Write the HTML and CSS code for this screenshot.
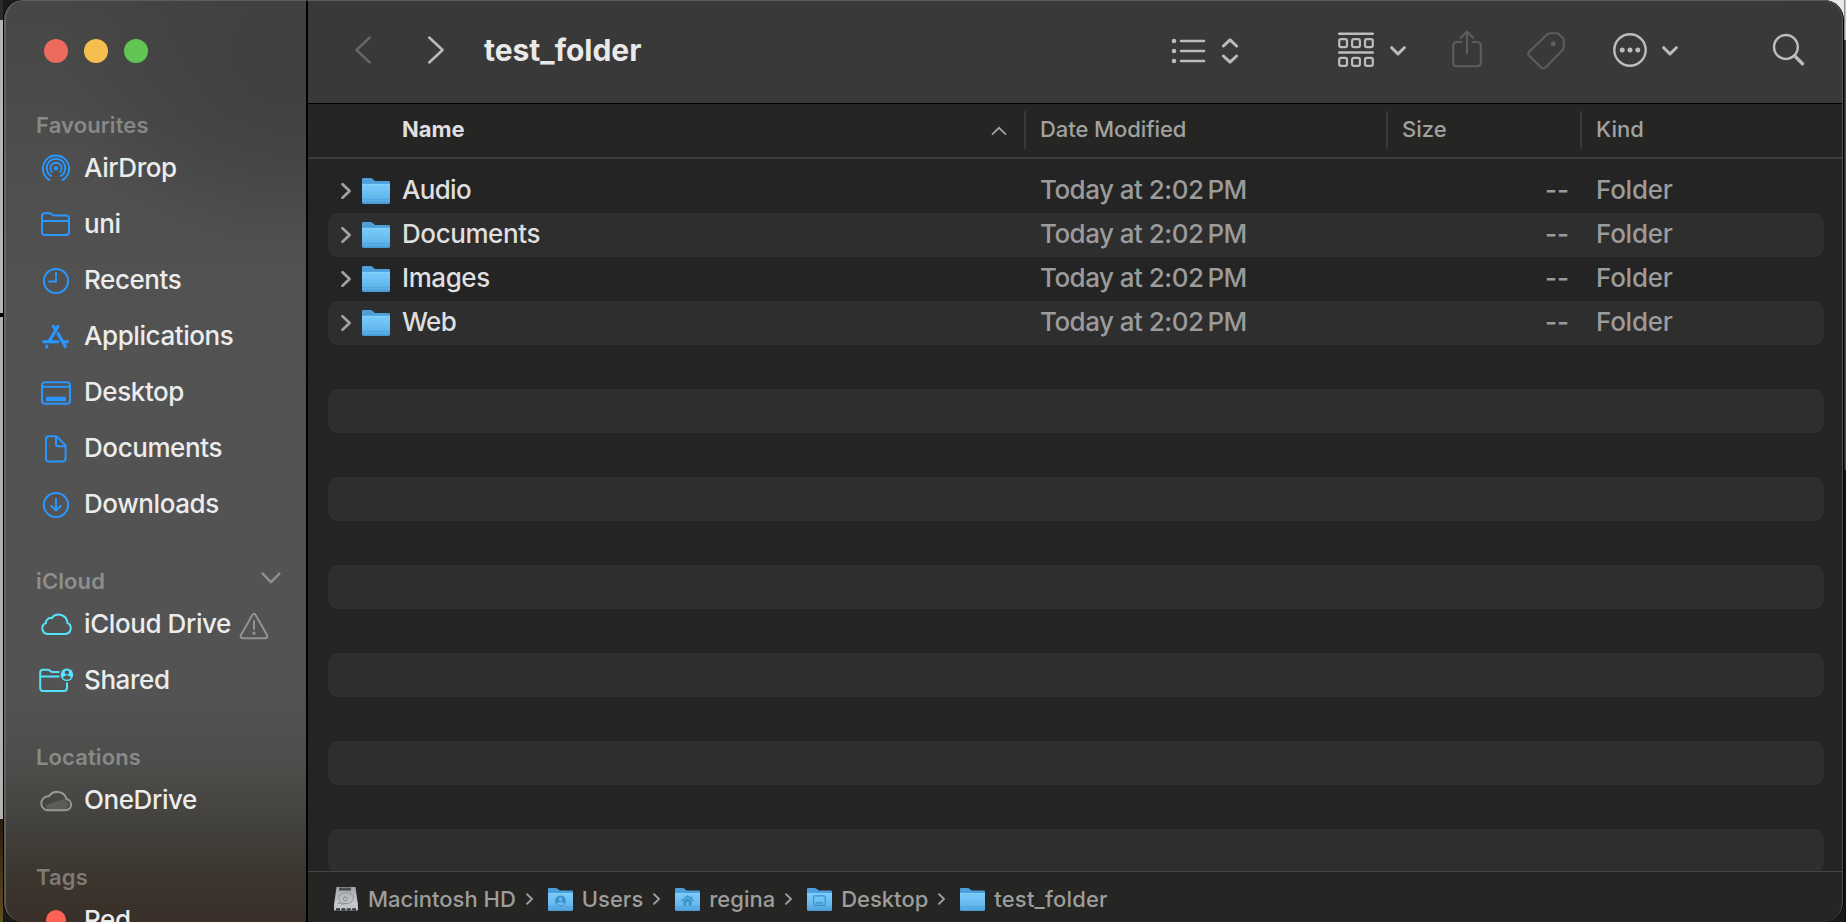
FILE: index.html
```html
<!DOCTYPE html>
<html lang="en">
<head>
<meta charset="utf-8">
<title>test_folder</title>
<link rel="stylesheet" href="styles.css">
</head>
<body>
<svg class="defs" width="0" height="0" aria-hidden="true">
  <defs>
    <linearGradient id="front" x1="0" y1="0" x2="0" y2="1">
      <stop offset="0" stop-color="#7accfa"/><stop offset=".72" stop-color="#62b6ec"/><stop offset=".76" stop-color="#4fa3dc"/><stop offset=".82" stop-color="#5cb0e8"/><stop offset="1" stop-color="#4796cf"/>
    </linearGradient>
    <linearGradient id="disk" x1="0" y1="0" x2="0" y2="1">
      <stop offset="0" stop-color="#a2a5a9"/><stop offset="1" stop-color="#c9ccd0"/>
    </linearGradient>
    <symbol id="folder" viewBox="0 0 28 28">
      <path d="M0 2.2Q0 1 1.2 1H8.6Q9.6 1 10.4 1.7L12.4 3.4Q13 4 14 4H26.8Q28 4 28 5.2V12H0Z" fill="#4b9fdb"/>
      <path d="M0 7H28V25.6Q28 27 26.6 27H1.4Q0 27 0 25.6Z" fill="url(#front)"/>
      <path d="M0 7.3H28" stroke="#8ed5fb" stroke-width=".7"/>
    </symbol>
    <symbol id="chev" viewBox="0 0 10 16"><path d="M1.5 1.2L8.6 8L1.5 14.8" fill="none" stroke="currentColor" stroke-width="2.6" stroke-linecap="round" stroke-linejoin="round"/></symbol>
    <symbol id="drop" viewBox="0 0 16 10"><path d="M1.7 1.7L8 8L14.3 1.7" fill="none" stroke="currentColor" stroke-width="3" stroke-linecap="round" stroke-linejoin="round"/></symbol>
  </defs>
</svg>
<div class="desktop">
<div class="edge edge-left"><i class="e-dark"></i><i class="e-light"></i><i class="e-black"></i><i class="e-light2"></i><i class="e-brown"></i></div>
<div class="window">
  <aside class="sidebar">
    <div class="lights"><i class="close"></i><i class="min"></i><i class="max"></i></div>
    <section class="group">
      <h2>Favourites</h2>
      <div class="item"><svg class="ic" viewBox="0 0 32 32" fill="none" stroke="currentColor" stroke-width="1.9"><circle cx="16" cy="16.3" r="2.2" fill="currentColor" stroke="none"/><path d="M10.2 28.4A13.1 13.1 0 1 1 21.8 28.4"/><path d="M11.8 24.4A9.3 9.3 0 1 1 20.2 24.4"/><path d="M12.4 20.6A5.6 5.6 0 1 1 19.6 20.6"/></svg><span>AirDrop</span></div>
      <div class="item"><svg class="ic" viewBox="0 0 32 32" fill="none" stroke="currentColor" stroke-width="2"><path d="M2 25V8Q2 5.2 4.8 5.2H9.2Q10.4 5.2 11.4 6L12.6 7Q13.4 7.6 14.6 7.6H26Q29 7.6 29 10.5V24Q29 27 26 27H5Q2 27 2 24.2ZM2 13H29"/></svg><span>uni</span></div>
      <div class="item"><svg class="ic" viewBox="0 0 32 32" fill="none" stroke="currentColor" stroke-width="2"><circle cx="16" cy="17" r="12.1"/><path d="M16 8.5V17.5H9" stroke-width="1.8" stroke-linecap="round"/></svg><span>Recents</span></div>
      <div class="item"><svg class="ic" viewBox="0 0 32 32" fill="none" stroke="currentColor" stroke-width="3.1" stroke-linecap="round"><path d="M13.4 6.4L15.2 9.4M18 6.4L9.6 20.6M3.6 21.8H17.8M24 21.8H27.4M6.6 26.8L7 26.2M18 13.4L25.3 26.6"/></svg><span>Applications</span></div>
      <div class="item"><svg class="ic" viewBox="0 0 32 32" fill="none" stroke="currentColor" stroke-width="2"><rect x="2" y="6.2" width="28" height="21.6" rx="3"/><path d="M2 10.8H30"/><rect x="6" y="20.8" width="20" height="4.4" rx="1" fill="currentColor" stroke="none"/></svg><span>Desktop</span></div>
      <div class="item"><svg class="ic" viewBox="0 0 32 32" fill="none" stroke="currentColor" stroke-width="2" stroke-linejoin="round"><path d="M8.8 4.2H16.4L25.6 13.4V26.6Q25.6 29.4 22.8 29.4H8.8Q6 29.4 6 26.6V7Q6 4.2 8.8 4.2Z"/><path d="M16 4.6V12.2Q16 14.2 18 14.2H25.4"/></svg><span>Documents</span></div>
      <div class="item"><svg class="ic" viewBox="0 0 32 32" fill="none" stroke="currentColor" stroke-width="2" stroke-linecap="round" stroke-linejoin="round"><circle cx="16" cy="17" r="12.1"/><path d="M16 11V22.4M11.2 17.8L16 22.6L20.8 17.8"/></svg><span>Downloads</span></div>
    </section>
    <section class="group">
      <h2>iCloud<svg class="fold" viewBox="0 0 20 12" fill="none" stroke="currentColor" stroke-width="2.4" stroke-linecap="round" stroke-linejoin="round"><path d="M1.6 1.6L10 10.2L18.4 1.6"/></svg></h2>
      <div class="item cyan"><svg class="ic" viewBox="0 0 32 32" fill="none" stroke="currentColor" stroke-width="2"><path d="M7 26H25.2A5.9 5.9 0 0 0 27.4 14.8A8.8 8.8 0 0 0 11.6 10.2A4.8 4.800 0 0 0 5.800 15A5.800 5.800 0 0 0 7 26Z"/></svg><span>iCloud Drive</span><svg class="warn" viewBox="0 0 30 28" fill="none" stroke="currentColor" stroke-width="2" stroke-linejoin="round" stroke-linecap="round"><path d="M13.2 3.2Q15 .4 16.8 3.2L28 23Q29.2 26.2 26 26.2H4Q.8 26.2 2 23ZM15 9V17"/><circle cx="15" cy="21.3" r=".7"/></svg></div>
      <div class="item cyan"><svg class="ic" viewBox="0 0 32 32" fill="none" stroke="currentColor" stroke-width="2"><path d="M19.5 8H12.6Q11.4 8 10.4 7Q9.4 5.8 8 5.8H3Q.2 5.8 .2 8.6V24Q.2 26.9 3 26.9H24Q27 26.9 27 24V18.6M.2 12.6H19.5"/><circle cx="26.9" cy="10.8" r="6.3" fill="currentColor" stroke="none"/><circle cx="26.9" cy="8.6" r="2.1" fill="#535353" stroke="none"/><path d="M22.9 14.1Q23.6 11.6 26.9 11.6T30.9 14.1Q29.4 15.8 26.9 15.8T22.9 14.1Z" fill="#535353" stroke="none"/></svg><span>Shared</span></div>
    </section>
    <section class="group">
      <h2>Locations</h2>
      <div class="item gray"><svg class="ic" viewBox="0 0 32 32" fill="none" stroke="currentColor" stroke-width="2"><path d="M6 21L24 15L29 21L25 26H7Z" fill="#5c5c5a" stroke="none"/><path d="M6.800 26.2H25.6A5.500 5.500 0 0 0 26.600 15.3A9.800 9.800 0 0 0 9 12.2A7.1 7.1 0 0 0 6.800 26.2Z"/></svg><span>OneDrive</span></div>
    </section>
    <section class="group">
      <h2>Tags</h2>
      <div class="item"><i class="tag"></i><span>Red</span></div>
    </section>
  </aside>
  <main class="main">
    <header class="toolbar">
      <svg class="back" viewBox="0 0 18 30"><path d="M15.8 2.5L2.4 15L15.8 27.5"/></svg>
      <svg class="fwd" viewBox="0 0 18 30"><path d="M2.2 2.5L15.6 15L2.2 27.5"/></svg>
      <h1>test_folder</h1>
      <svg class="t-list" viewBox="0 0 68 28" fill="none" stroke="currentColor" stroke-width="2.5" stroke-linecap="round" stroke-linejoin="round"><g fill="currentColor" stroke="none"><circle cx="3" cy="4" r="2.3"/><circle cx="3" cy="14" r="2.3"/><circle cx="3" cy="24" r="2.3"/></g><path d="M10 4H33M10 14H33M10 24H33"/><path d="M52.4 9L59 2.8L65.6 9M52.4 19L59 25.2L65.6 19" stroke-width="3"/></svg>
      <svg class="t-group" viewBox="0 0 36 36" fill="none" stroke="currentColor" stroke-width="2.2"><path d="M1.2 1.7H34.8M1.2 20.5H34.8" stroke-width="2.4" stroke-linecap="round"/><g id="boxes"><rect x="1.2" y="7.1" width="7.8" height="8" rx="1.8"/><rect x="14.1" y="7.1" width="7.8" height="8" rx="1.8"/><rect x="27" y="7.1" width="7.8" height="8" rx="1.8"/></g><use href="#boxes" y="18.7"/></svg>
      <svg class="t-drop1"><use href="#drop"/></svg>
      <svg class="t-share dim" viewBox="0 0 30 38" fill="none" stroke="currentColor" stroke-width="2.1" stroke-linecap="round" stroke-linejoin="round"><path d="M9.5 12H5Q1.2 12 1.2 15.8V32.4Q1.2 36.2 5 36.2H25Q28.8 36.2 28.8 32.4V15.8Q28.8 12 25 12H20.5M15 23V2.2M8.8 7.8L15 1.6L21.2 7.8"/></svg>
      <svg class="t-tag dim" viewBox="0 0 38 38" fill="none" stroke="currentColor" stroke-width="2.1" stroke-linejoin="round"><path d="M20 2.4Q21.2 1.2 23 1.2H29.5Q31 1.2 32 2.2L35.8 6Q36.8 7 36.8 8.5V15Q36.8 16.8 35.6 18L18.6 35.4Q16.4 37.6 14.2 35.4L2.2 23.8Q0 21.6 2.2 19.8Z"/><circle cx="26.2" cy="11.8" r="2.5" fill="currentColor" stroke="none"/></svg>
      <svg class="t-more" viewBox="0 0 34 34" fill="none" stroke="currentColor" stroke-width="2.4"><circle cx="17" cy="17" r="15.7"/><g fill="currentColor" stroke="none"><circle cx="9.2" cy="17" r="2.5"/><circle cx="17" cy="17" r="2.5"/><circle cx="24.8" cy="17" r="2.5"/></g></svg>
      <svg class="t-drop2"><use href="#drop"/></svg>
      <svg class="t-find" viewBox="0 0 34 34" fill="none" stroke="currentColor" stroke-linecap="round"><circle cx="13.9" cy="14" r="11.9" stroke-width="2.5"/><path d="M22.6 22.8L30.500 30.700" stroke-width="3.4"/></svg>
    </header>
    <div class="cols head">
      <div class="c-name">Name<svg class="sort" viewBox="0 0 16 10"><path d="M1 8.6L8 1.8L15 8.6" fill="none" stroke="currentColor" stroke-width="1.8"/></svg></div>
      <div class="c-date">Date Modified</div><div class="c-size">Size</div><div class="c-kind">Kind</div>
    </div>
    <div class="list">
      <div class="cols row"><div class="c-name"><svg class="disc"><use href="#chev"/></svg><svg class="fold-ic"><use href="#folder"/></svg><span class="tight">Audio</span></div><div class="c-date">Today at 2:02&#8239;PM</div><div class="c-size">--</div><div class="c-kind">Folder</div></div>
      <div class="cols row"><div class="c-name"><svg class="disc"><use href="#chev"/></svg><svg class="fold-ic"><use href="#folder"/></svg><span>Documents</span></div><div class="c-date">Today at 2:02&#8239;PM</div><div class="c-size">--</div><div class="c-kind">Folder</div></div>
      <div class="cols row"><div class="c-name"><svg class="disc"><use href="#chev"/></svg><svg class="fold-ic"><use href="#folder"/></svg><span>Images</span></div><div class="c-date">Today at 2:02&#8239;PM</div><div class="c-size">--</div><div class="c-kind">Folder</div></div>
      <div class="cols row"><div class="c-name"><svg class="disc"><use href="#chev"/></svg><svg class="fold-ic"><use href="#folder"/></svg><span class="tight">Web</span></div><div class="c-date">Today at 2:02&#8239;PM</div><div class="c-size">--</div><div class="c-kind">Folder</div></div>
      <div class="row"></div><div class="row"></div><div class="row"></div><div class="row"></div><div class="row"></div><div class="row"></div><div class="row"></div><div class="row"></div><div class="row"></div><div class="row"></div><div class="row"></div><div class="row"></div>
    </div>
    <footer class="path">
      <svg class="p-disk" viewBox="0 0 26 26"><path d="M3.5 1H22.5L25 19H1Z" fill="url(#disk)"/><rect x="1" y="18.6" width="24" height="6" rx="1" fill="#c3c6c9"/><path d="M3 23.4H23" stroke="#33363a" stroke-width="2.2" stroke-dasharray="4 1.4"/><rect x="6" y="1.6" width="12" height="3" fill="#4c5054"/><ellipse cx="13" cy="12" rx="7.4" ry="5.6" fill="none" stroke="#9a9ea2" stroke-width="1.1"/><circle cx="12.4" cy="13" r="2" fill="none" stroke="#85898d"/><path d="M4.5 17Q9 19 14 17.4" fill="none" stroke="#85898d"/></svg>
      <span>Macintosh HD</span><svg class="sep"><use href="#chev"/></svg>
      <svg class="p-fold" viewBox="0 0 28 28"><use href="#folder"/><circle cx="14" cy="15.5" r="6" fill="#3e90cd"/><circle cx="14" cy="13.6" r="2" fill="#6abcf0"/><path d="M10 19Q10.6 16.5 14 16.5T18 19Q16.500 20.4 14 20.4T10 19Z" fill="#6abcf0"/></svg>
      <span>Users</span><svg class="sep"><use href="#chev"/></svg>
      <svg class="p-fold" viewBox="0 0 28 28"><use href="#folder"/><path d="M7.2 15.8L14 10L20.800 15.8M18.5 10.5V13" fill="none" stroke="#3e90cd" stroke-width="1.5"/><path d="M9.4 15.8L14 12L18.600 15.8V21H15.500V17H12.500V21H9.400Z" fill="#3e90cd"/></svg>
      <span>regina</span><svg class="sep"><use href="#chev"/></svg>
      <svg class="p-fold" viewBox="0 0 28 28"><use href="#folder"/><rect x="7.500" y="10" width="13" height="10.500" rx="1.300" fill="none" stroke="#3e90cd" stroke-width="1.300"/><path d="M10 17.800H18" stroke="#3e90cd" stroke-width="1.500"/></svg>
      <span>Desktop</span><svg class="sep"><use href="#chev"/></svg>
      <svg class="p-fold" viewBox="0 0 28 28"><use href="#folder"/></svg>
      <span class="wide">test_folder</span>
    </footer>
  </main>
</div>
<div class="edge edge-right"><i class="r-white"></i><i class="r-gray"></i><i class="r-dark"></i></div>
</div>
</body>
</html>
```
FILE: styles.css
```css
* { box-sizing: border-box; }
body { margin: 0; background: #1c1c1c; font-family: Inter, "Liberation Sans", sans-serif; overflow: hidden; }
h1, h2 { margin: 0; }
svg { display: block; flex: none; overflow: visible; }
.defs { position: absolute; }
.desktop { display: flex; width: 1846px; height: 922px; overflow: hidden; background: linear-gradient(90deg, transparent 50%, #e8e8e8 50%) 0 0 / 100% 20px no-repeat, #1a1a1a; }

.edge { display: flex; flex-direction: column; }
.edge-left { width: 3px; }
.edge-right { width: 2px; }
.edge i { display: block; }
.e-dark { height: 20px; background: #2b2b2b; }
.e-light { height: 293px; background: #b6b5b4; }
.e-black { height: 4px; background: #000; }
.e-light2 { height: 502px; background: #b2b2b2; }
.e-brown { flex: 1; background: linear-gradient(#2a1a0c, #5e5020); }
.r-white { height: 40px; background: linear-gradient(90deg, #777, #d8d8d8); }
.r-gray { height: 430px; background: linear-gradient(90deg, #111, #66645e); }
.r-dark { flex: 1; background: #101216; }

.window { display: flex; width: 1841px; height: 922px; border: solid #000; border-width: 0 1px; border-radius: 20px; overflow: hidden; position: relative; background: #242424; }
.window::after { content: ""; position: absolute; inset: 0; border: solid #74747490; border-width: 1px 1px 0 2px; border-radius: 19px; pointer-events: none; }

.sidebar { width: 304px; flex: none; border-right: 2px solid #000; height: 922px; overflow: hidden; padding-top: 39px;
  background: radial-gradient(240px 200px at 290px 60px, #413f40 15%, #413f4000 100%), linear-gradient(#464644 0, #4a4a49 80px, #505050 200px, #535353 400px, #535353 690px, #4c4c4a 770px, #42403c 830px, #3b352e 880px, #392f28 922px); }
.lights { display: flex; gap: 16px; padding-left: 40px; margin-bottom: 47px; }
.lights i { width: 24px; height: 24px; border-radius: 50%; }
.close { background: #ed6a5e; }
.min { background: #f5bf4f; }
.max { background: #61c554; }
.group { margin-bottom: 34px; }
.group h2 { display: flex; align-items: center; justify-content: space-between; height: 30px; padding: 0 25px 0 32px; font-size: 22px; font-weight: 600; color: rgba(255,255,255,.35); letter-spacing: .12px; }
.fold { width: 20px; height: 12px; margin-top: -6px; }
.item { display: flex; align-items: center; height: 56px; padding-left: 36px; font-size: 26px; color: #2997ff; }
.item span { margin-left: 12px; padding-bottom: 2px; color: #ececec; font-weight: 450; letter-spacing: -.42px; white-space: nowrap; }
.ic { width: 32px; height: 32px; }
.cyan { color: #55e3fb; }
.gray { color: #979796; }
.warn { width: 30px; height: 28px; color: #929292; margin: 3px 0 0 8px; }
.tag { width: 20px; height: 20px; margin: 0 6px; border-radius: 50%; background: #ff6156; }

.main { flex: 1; display: flex; flex-direction: column; min-width: 0; }
.toolbar { display: flex; align-items: center; height: 104px; flex: none; background: #393939; border-bottom: 1px solid #000; color: #bcbcbc; padding-bottom: 3px; }
.back, .fwd { width: 18px; height: 30px; fill: none; stroke: #656565; stroke-width: 2.5; stroke-linecap: round; stroke-linejoin: round; margin-left: 46px; }
.fwd { stroke: #bcbcbc; margin-left: 55px; }
.toolbar h1 { width: 687px; margin-left: 39px; font-size: 30px; font-weight: 700; color: #e9e9e9; }
.t-list { width: 68px; height: 28px; margin-top: 2px; }
.t-group { width: 36px; height: 36px; margin-left: 99px; }
.t-drop1 { width: 16px; height: 10px; margin: 2px 0 0 16px; }
.t-share { width: 30px; height: 38px; margin: -3px 0 0 46px; }
.t-tag { width: 38px; height: 38px; margin: 2px 0 0 45px; }
.t-more { width: 34px; height: 34px; margin-left: 48px; }
.t-drop2 { width: 16px; height: 10px; margin: 2px 0 0 15px; }
.t-find { width: 34px; height: 34px; margin-left: 94px; }
.dim { color: #5d5d5d; }

.cols { display: grid; grid-template-columns: 716px 362px 194px 1fr; }
.head { height: 55px; flex: none; background: #252523; border-bottom: 2px solid #3d3d3b; font-size: 22px; font-weight: 500; color: #a1a1a0; padding-top: 7px; }
.head > div { height: 38px; line-height: 36px; padding-left: 14px; border-left: 2px solid #3a3a38; }
.head .c-name { display: flex; align-items: center; justify-content: space-between; border: 0; padding: 0 17px 2px 94px; font-weight: 700; color: #dfdfdf; }
.head .c-date { letter-spacing: -.08px; }
.sort { width: 16px; height: 10px; color: #a1a1a0; margin-top: 4px; }
.list { height: 712px; flex: none; overflow: hidden; padding: 10px 19px 0 20px; background: #242424; }
.row { height: 44px; border-radius: 10px; font-size: 26px; color: #9b9b9b; line-height: 42px; font-weight: 450; }
.row:nth-child(even) { background: #2e2e2e; }
.row.cols { grid-template-columns: 712px 362px 181px 1fr; }
.row .c-name { display: flex; align-items: center; padding-left: 13px; color: #dfdfdf; }
.row .c-name span { margin-left: 12px; padding-bottom: 2px; letter-spacing: -.42px; }
.row .c-name .tight { letter-spacing: -.7px; }
.row .c-date { letter-spacing: -.52px; }
.disc { width: 10px; height: 16px; color: #a2a2a2; }
.fold-ic { width: 28px; height: 28px; margin-left: 11px; }
.row .c-size { text-align: right; padding-right: 14px; }
.row .c-kind { padding-left: 13px; letter-spacing: -.25px; }

.path { flex: 1; display: flex; align-items: center; background: #252523; border-top: 1px solid #454545; font-size: 22px; font-weight: 500; color: #9d9d9c; padding: 4px 0 0 25px; }
.path span { margin-left: 9px; white-space: nowrap; }
.path .wide { letter-spacing: .2px; }
.p-disk { width: 26px; height: 26px; }
.p-fold { width: 25px; height: 25px; margin-left: 15px; }
.sep { width: 7px; height: 12px; margin-left: 10px; }
```
